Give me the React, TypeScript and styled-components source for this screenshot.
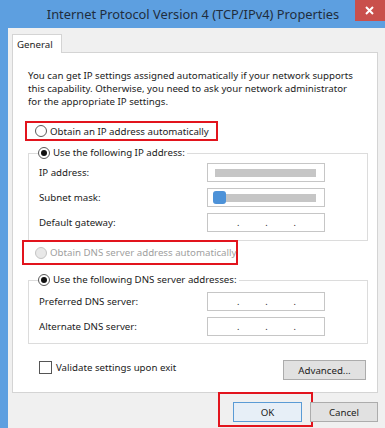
import styled, { createGlobalStyle } from 'styled-components';

const GlobalStyle = createGlobalStyle`
  html, body {
    margin: 0;
    padding: 0;
    background: #f0f0f0;
  }
  * {
    box-sizing: border-box;
  }
`;

const FONT = `"Noto Sans", "Open Sans", "DejaVu Sans", sans-serif`;
const FRAME = '#5d9fe0';
const RED = '#e2141d';

const Window = styled.div`
  width: 385px;
  height: 428px;
  overflow: hidden;
  display: flex;
  flex-direction: column;
  font-family: ${FONT};
  font-size: 9.7px;
  color: #1b1b1b;
  background: #f0f0f0;
`;

const TitleBar = styled.div`
  height: 28px;
  flex: none;
  background: ${FRAME};
  display: flex;
  align-items: flex-start;
`;

const TitleSpacer = styled.div`
  width: 29px;
  flex: none;
`;

const Title = styled.div`
  flex: 1;
  height: 28px;
  line-height: 28px;
  text-align: center;
  padding-left: 2px;
  font-size: 12.85px;
  color: #1f2d3d;
  white-space: nowrap;
`;

const CloseButton = styled.div`
  width: 30px;
  height: 21px;
  flex: none;
  background: #c9504c;
  display: flex;
  align-items: center;
  justify-content: center;
  padding-right: 2px;
`;

const Body = styled.div`
  flex: 1;
  display: flex;
`;

const SideFrame = styled.div`
  width: 8px;
  flex: none;
  background: ${FRAME};
`;

const Client = styled.div`
  flex: 1;
  display: flex;
  flex-direction: column;
  padding: 6px 7px 0 4px;
`;

const Tab = styled.div`
  width: 50px;
  height: 19px;
  border: 1px solid #d4d4d4;
  border-bottom: none;
  background: #fff;
  padding: 3px 0 0 4px;
  margin-bottom: -1px;
  position: relative;
  z-index: 1;
`;

const Panel = styled.div`
  height: 341px;
  background: #fff;
  border: 1px solid #d4d4d4;
  padding: 16px 0 0 15px;
  display: flex;
  flex-direction: column;
`;

const Paragraph = styled.p`
  margin: 0 0 13px;
  line-height: 13px;
  white-space: nowrap;
`;

const Highlight = styled.div<{ $width: number; $left: number; $height: number; $top: number }>`
  width: ${p => p.$width}px;
  height: ${p => p.$height}px;
  margin-left: ${p => p.$left}px;
  margin-top: ${p => p.$top}px;
  border: 2px solid ${RED};
  display: flex;
  align-items: center;
  padding-left: ${p => 5 - p.$left}px;
  position: relative;
  z-index: 2;
`;

const RadioLabel = styled.div<{ $disabled?: boolean }>`
  display: flex;
  align-items: center;
  gap: 3px;
  color: ${p => (p.$disabled ? '#a0a0a0' : 'inherit')};
  white-space: nowrap;
`;

const RadioCircle = styled.span<{ $checked?: boolean; $disabled?: boolean }>`
  width: 12px;
  height: 12px;
  border-radius: 50%;
  border: 1px solid ${p => (p.$disabled ? '#c4c4c4' : '#5a5a5a')};
  background: ${p => (p.$disabled ? '#e8e8e8' : '#fff')};
  display: flex;
  align-items: center;
  justify-content: center;
  flex: none;
  &::after {
    content: '';
    display: ${p => (p.$checked ? 'block' : 'none')};
    width: 6px;
    height: 6px;
    border-radius: 50%;
    background: #111;
  }
`;

const Group = styled.fieldset<{ $height: number; $top: number }>`
  margin: ${p => p.$top}px 0 0;
  width: 340px;
  height: ${p => p.$height}px;
  border: 1px solid #dcdcdc;
  padding: 0 0 0 10px;
  display: flex;
  flex-direction: column;
`;

const Legend = styled.legend`
  padding: 0 2px 0 0;
  margin-left: -1px;
  line-height: 14px;
`;

const FieldRow = styled.div<{ $top: number }>`
  display: flex;
  align-items: center;
  justify-content: space-between;
  width: 286px;
  margin-top: ${p => p.$top}px;
`;

const IpField = styled.div`
  position: relative;
  width: 118px;
  height: 19px;
  border: 1px solid #c6c6c6;
  background: #fff;
  display: flex;
  align-items: center;
  padding: 0 28px 0 29px;
  justify-content: space-between;
  font-size: 9px;
  color: #222;
`;

const Blur = styled.span`
  position: absolute;
  left: 7px;
  right: 8px;
  top: 5px;
  bottom: 4px;
  background: #c6c6c6;
`;

const Caret = styled.span`
  position: absolute;
  left: 5px;
  top: 2px;
  width: 13px;
  height: 13px;
  background: #4d92d8;
  border-radius: 3px;
  z-index: 1;
`;

const BottomRow = styled.div`
  display: flex;
  align-items: flex-start;
  justify-content: space-between;
  width: 338px;
  margin-top: 16px;
  padding-left: 11px;
`;

const CheckLabel = styled.div`
  display: flex;
  align-items: center;
  gap: 4px;
  margin-top: 1px;
`;

const CheckBox = styled.span`
  width: 13px;
  height: 13px;
  border: 1px solid #555;
  background: #fff;
`;

const Button = styled.div<{ $default?: boolean; $width: number }>`
  width: ${p => p.$width}px;
  height: 20px;
  border: 1px solid ${p => (p.$default ? '#5a9bd5' : '#acacac')};
  background: ${p => (p.$default ? '#e7eff7' : '#e1e1e1')};
  display: flex;
  align-items: center;
  justify-content: center;
`;

const Footer = styled.div`
  display: flex;
  justify-content: flex-end;
  align-items: flex-start;
  gap: 8px;
  margin-top: 9px;
`;

const OkFrame = styled.div`
  border: 2px solid ${RED};
  padding: 8px 9px 3px 13px;
  margin-right: -11px;
  margin-top: -10px;
`;

const Dots = () => (
  <>
    <span>.</span>
    <span>.</span>
    <span>.</span>
  </>
);

export default function App() {
  return (
    <Window>
      <GlobalStyle />
      <TitleBar>
        <TitleSpacer />
        <Title>Internet Protocol Version 4 (TCP/IPv4) Properties</Title>
        <CloseButton>
          <svg width="9" height="9" viewBox="0 0 9 9">
            <path d="M1 1 L8 8 M8 1 L1 8" stroke="#fff" strokeWidth="2" />
          </svg>
        </CloseButton>
      </TitleBar>
      <Body>
        <SideFrame />
        <Client>
          <Tab>General</Tab>
          <Panel>
            <Paragraph>
              You can get IP settings assigned automatically if your network supports
              <br />
              this capability. Otherwise, you need to ask your network administrator
              <br />
              for the appropriate IP settings.
            </Paragraph>
            <Highlight $width={193} $left={-3} $height={20} $top={0}>
              <RadioLabel>
                <RadioCircle />
                Obtain an IP address automatically
              </RadioLabel>
            </Highlight>
            <Group $height={95} $top={5}>
              <Legend>
                <RadioLabel>
                  <RadioCircle $checked />
                  Use the following IP address:
                </RadioLabel>
              </Legend>
              <FieldRow $top={3}>
                IP address:
                <IpField>
                  <Blur />
                </IpField>
              </FieldRow>
              <FieldRow $top={6}>
                Subnet mask:
                <IpField>
                  <Caret />
                  <Blur />
                </IpField>
              </FieldRow>
              <FieldRow $top={6}>
                Default gateway:
                <IpField>
                  <Dots />
                </IpField>
              </FieldRow>
            </Group>
            <Highlight $width={216} $left={-6} $height={25} $top={-1}>
              <RadioLabel $disabled>
                <RadioCircle $disabled />
                Obtain DNS server address automatically
              </RadioLabel>
            </Highlight>
            <Group $height={71} $top={8}>
              <Legend>
                <RadioLabel>
                  <RadioCircle $checked />
                  Use the following DNS server addresses:
                </RadioLabel>
              </Legend>
              <FieldRow $top={5}>
                Preferred DNS server:
                <IpField>
                  <Dots />
                </IpField>
              </FieldRow>
              <FieldRow $top={6}>
                Alternate DNS server:
                <IpField>
                  <Dots />
                </IpField>
              </FieldRow>
            </Group>
            <BottomRow>
              <CheckLabel>
                <CheckBox />
                Validate settings upon exit
              </CheckLabel>
              <Button $width={83}>Advanced...</Button>
            </BottomRow>
          </Panel>
          <Footer>
            <OkFrame>
              <Button $default $width={69}>OK</Button>
            </OkFrame>
            <Button $width={68}>Cancel</Button>
          </Footer>
        </Client>
      </Body>
    </Window>
  );
}
